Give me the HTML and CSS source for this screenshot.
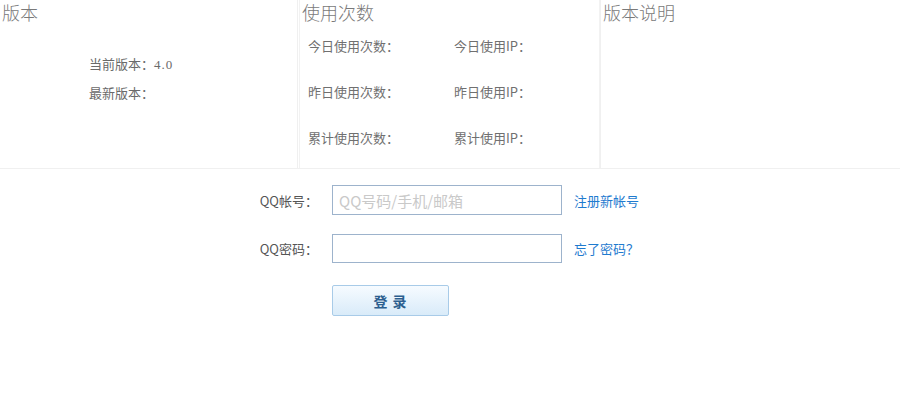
FILE: index.html
```html
<!DOCTYPE html>
<html lang="zh-CN">
<head>
<meta charset="utf-8">
<title>版本</title>
<link rel="stylesheet" href="styles.css">
</head>
<body>
<div class="panels">
  <section class="panel panel-version">
    <h2 class="panel-title">版本</h2>
    <div class="version-info">
      <p class="line">当前版本：<span class="num">4.0</span></p>
      <p class="line">最新版本：</p>
    </div>
  </section>
  <section class="panel panel-usage">
    <h2 class="panel-title">使用次数</h2>
    <div class="usage-grid">
      <span>今日使用次数：</span><span>今日使用IP：</span>
      <span>昨日使用次数：</span><span>昨日使用IP：</span>
      <span>累计使用次数：</span><span>累计使用IP：</span>
    </div>
  </section>
  <section class="panel panel-notes">
    <h2 class="panel-title">版本说明</h2>
  </section>
</div>
<form class="login">
  <div class="row">
    <label class="label" for="qq">QQ帐号：</label>
    <input class="field" id="qq" type="text" placeholder="QQ号码/手机/邮箱">
    <a class="link" href="#">注册新帐号</a>
  </div>
  <div class="row row-pw">
    <label class="label" for="pw">QQ密码：</label>
    <input class="field" id="pw" type="password">
    <a class="link" href="#">忘了密码？</a>
  </div>
  <div class="row row-btn">
    <span class="label"></span>
    <button class="btn" type="button">登 录</button>
  </div>
</form>
</body>
</html>
```
FILE: styles.css
```css
html, body {
  margin: 0;
  padding: 0;
  background: #fff;
  font-family: "Noto Sans CJK SC", "Liberation Sans", sans-serif;
  color: #666;
}

.panels {
  display: grid;
  grid-template-columns: 298px 302px 1fr;
  height: 168px;
  border-bottom: 1px solid #f0f0f0;
}

.panel {
  box-sizing: border-box;
  height: 168px;
}

.panel-version {
  border-right: 1px solid #f0f0f0;
}

.panel-usage {
  margin-left: 1px;
  border-left: 1px solid #f2f2f2;
  border-right: 1px solid #f2f2f2;
  padding-left: 2px;
}

.panel-notes {
  border-left: 1px solid #f0f0f0;
  padding-left: 2px;
}

.panel-title {
  margin: 0;
  font-size: 18px;
  font-weight: 300;
  line-height: 24px;
  color: #7a7a7a;
  padding-left: 0;
}

.panel-version .panel-title {
  padding-left: 2px;
}

.version-info {
  padding-left: 89px;
  padding-top: 26px;
}

.line {
  margin: 0;
  font-size: 13px;
  line-height: 28px;
  color: #6a6a6a;
}

.num {
  font-family: "Liberation Serif", serif;
  font-size: 13px;
  letter-spacing: 1px;
}

.usage-grid {
  display: grid;
  grid-template-columns: 146px 1fr;
  grid-auto-rows: 46px;
  padding-left: 6px;
  margin-top: -1px;
  font-size: 13px;
  color: #707070;
  line-height: 46px;
}

.login {
  display: flex;
  flex-direction: column;
  padding-top: 16px;
}

.row {
  display: flex;
  align-items: center;
  height: 30px;
}

.row-pw {
  height: 29px;
  margin-top: 19px;
}

.row-btn {
  height: 31px;
  margin-top: 22px;
}

.label {
  width: 332px;
  padding-right: 14px;
  box-sizing: border-box;
  text-align: right;
  font-size: 13px;
  color: #555;
  flex: none;
}

.field {
  box-sizing: border-box;
  width: 230px;
  height: 30px;
  margin: 0;
  border: 1px solid #9db3cc;
  padding: 0 6px;
  font-family: "Noto Sans CJK SC", "Liberation Sans", sans-serif;
  font-size: 15px;
  color: #333;
  outline: none;
}

.row-pw .field {
  height: 29px;
}

.field::placeholder {
  color: #c9c9c9;
}

.link {
  margin-left: 12px;
  font-size: 13px;
  color: #1f7bcf;
  text-decoration: none;
}

.btn {
  box-sizing: border-box;
  width: 117px;
  height: 31px;
  margin: 0;
  border: 1px solid #a8cbe8;
  border-radius: 2px;
  background: linear-gradient(#f6fbff, #d9ebf9);
  font-family: "Noto Sans CJK SC", "Liberation Sans", sans-serif;
  font-size: 14px;
  font-weight: bold;
  color: #2c5f8f;
  letter-spacing: 1px;
  padding: 0;
  flex: none;
}
```
